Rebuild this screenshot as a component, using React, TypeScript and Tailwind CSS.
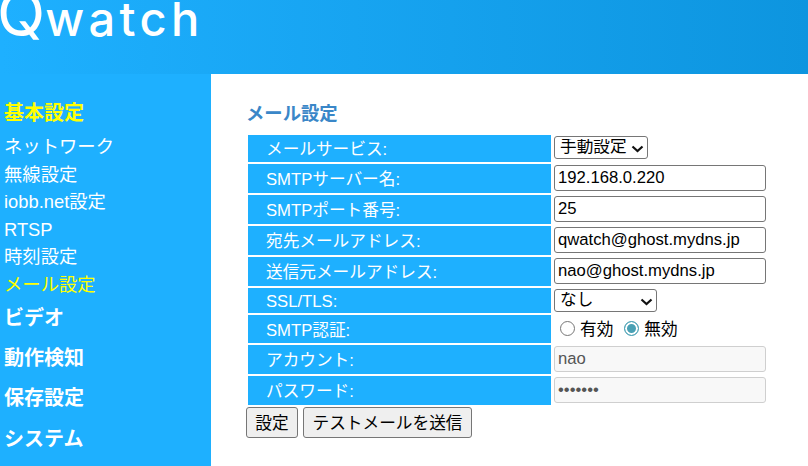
const font = { fontFamily: '"Liberation Sans","Noto Sans CJK JP",sans-serif' };

const sub = ["ネットワーク", "無線設定", "iobb.net設定", "RTSP", "時刻設定", "メール設定"];

function Label({ children, h }: { children: React.ReactNode; h: string }) {
  return (
    <td className={`${h} w-[303px] bg-[#1eb0ff] p-0 pl-[18px] pt-[4px] text-[16.67px] leading-none text-white align-middle`}>
      {children}:
    </td>
  );
}

function Chevron({ right }: { right: string }) {
  return (
    <svg
      className={`pointer-events-none absolute top-[9px] ${right}`}
      width="13"
      height="8"
      viewBox="0 0 13 8"
      fill="none"
      stroke="#111"
      strokeWidth="2.2"
    >
      <path d="M1.5 1.5 L6.5 6 L11.5 1.5" />
    </svg>
  );
}

const tdCls = "p-0 pl-px pt-px align-top";
const inputCls =
  "block h-[26px] w-[212px] rounded-[3px] border border-[#767676] bg-white px-[3px] text-[16.67px] text-black outline-none";
const disabledCls =
  "block h-[26px] w-[212px] rounded-[3px] border border-[#cfcfcf] bg-[#f8f8f8] px-[3px] text-[16.67px] text-[#555] outline-none";
const radioCls =
  "m-0 mr-[5px] h-[15px] w-[15px] appearance-none rounded-full border-[1.5px] border-[#767676] bg-white checked:border-[#4aa1b5] checked:bg-[#4aa1b5] checked:shadow-[inset_0_0_0_2px_white]";

export default function App() {
  return (
    <div style={font} className="flex h-[466px] w-[808px] flex-col overflow-hidden bg-white">
      <header className="h-[74px] shrink-0 overflow-hidden bg-gradient-to-r from-[#1eb0ff] to-[#0d95df]">
        <div
          style={{ fontFamily: "Inter,sans-serif" }}
          className="-mt-[17px] -ml-[3px] flex items-baseline text-white"
        >
          <span className="text-[63px] font-normal leading-[60px]">Q</span>
          <span className="text-[47px] font-medium leading-[60px] tracking-[4.4px]">watch</span>
        </div>
      </header>
      <div className="flex flex-1">
        <nav className="w-[211px] shrink-0 bg-[#1eb0ff] pl-[4px] pt-[26px] text-white">
          <div className="h-[33px] text-[20px] font-bold leading-[26px] text-[#ffff00]">基本設定</div>
          {sub.map((s, i) => (
            <div
              key={s}
              className={`h-[27.6px] text-[18.33px] leading-[27px] ${i === 5 ? "text-[#ffff00]" : "text-white"}`}
            >
              {s}
            </div>
          ))}
          <div className="mt-[6px] flex flex-col">
            {["ビデオ", "動作検知", "保存設定", "システム"].map((s) => (
              <div key={s} className="h-[40.4px] text-[20px] font-bold leading-[27px]">
                {s}
              </div>
            ))}
          </div>
        </nav>
        <main className="flex-1 pl-[36px] pt-[28px]">
          <h1 className="-ml-px h-[31px] text-[18.33px] font-bold leading-[24px] text-[#3a87c8]">メール設定</h1>
          <table className="-ml-[1px] border-separate border-spacing-[2px]">
            <tbody>
              <tr>
                <Label h="h-[27px]">メールサービス</Label>
                <td className={tdCls}>
                  <div className="relative h-[23px] w-[94px]">
                    <select className="block h-[23px] w-[94px] appearance-none rounded-[3px] border border-[#767676] bg-white pl-[5px] text-[16.67px] leading-none text-black">
                      <option>手動設定</option>
                    </select>
                    <Chevron right="right-[4px]" />
                  </div>
                </td>
              </tr>
              <tr>
                <Label h="h-[29px]">SMTPサーバー名</Label>
                <td className={tdCls}>
                  <input readOnly value="192.168.0.220" className={inputCls} />
                </td>
              </tr>
              <tr>
                <Label h="h-[29px]">SMTPポート番号</Label>
                <td className={tdCls}>
                  <input readOnly value="25" className={inputCls} />
                </td>
              </tr>
              <tr>
                <Label h="h-[29px]">宛先メールアドレス</Label>
                <td className={tdCls}>
                  <input readOnly value="qwatch@ghost.mydns.jp" className={inputCls} />
                </td>
              </tr>
              <tr>
                <Label h="h-[29px]">送信元メールアドレス</Label>
                <td className={tdCls}>
                  <input readOnly value="nao@ghost.mydns.jp" className={inputCls} />
                </td>
              </tr>
              <tr>
                <Label h="h-[25px]">SSL/TLS</Label>
                <td className={tdCls}>
                  <div className="relative h-[23px] w-[103px]">
                    <select className="block h-[23px] w-[103px] appearance-none rounded-[3px] border border-[#767676] bg-white pl-[5px] text-[16.67px] leading-none text-black">
                      <option>なし</option>
                    </select>
                    <Chevron right="right-[4px]" />
                  </div>
                </td>
              </tr>
              <tr>
                <Label h="h-[28px]">SMTP認証</Label>
                <td className="p-0 pl-px align-middle text-[16.67px] leading-none text-black">
                  <div className="flex h-[20px] items-center">
                    <label className="ml-[6px] flex items-center">
                      <input type="radio" name="a" readOnly className={radioCls} />
                      <span className="pt-[3px]">有効</span>
                    </label>
                    <label className="ml-[11px] flex items-center">
                      <input type="radio" name="a" readOnly defaultChecked className={radioCls} />
                      <span className="pt-[3px]">無効</span>
                    </label>
                  </div>
                </td>
              </tr>
              <tr>
                <Label h="h-[29px]">アカウント</Label>
                <td className={tdCls}>
                  <input disabled value="nao" className={disabledCls} />
                </td>
              </tr>
              <tr>
                <Label h="h-[29px]">パスワード</Label>
                <td className={tdCls}>
                  <input disabled type="password" value="1234567" className={disabledCls} />
                </td>
              </tr>
            </tbody>
          </table>
          <div className="-ml-[1px] flex gap-[5px]">
            <button className="h-[31px] w-[52px] rounded-[3px] border border-[#767676] bg-[#efefef] pt-[2px] text-[16.67px] text-black">
              設定
            </button>
            <button className="h-[31px] w-[169px] rounded-[3px] border border-[#767676] bg-[#efefef] pt-[2px] text-[16.67px] text-black">
              テストメールを送信
            </button>
          </div>
        </main>
      </div>
    </div>
  );
}
